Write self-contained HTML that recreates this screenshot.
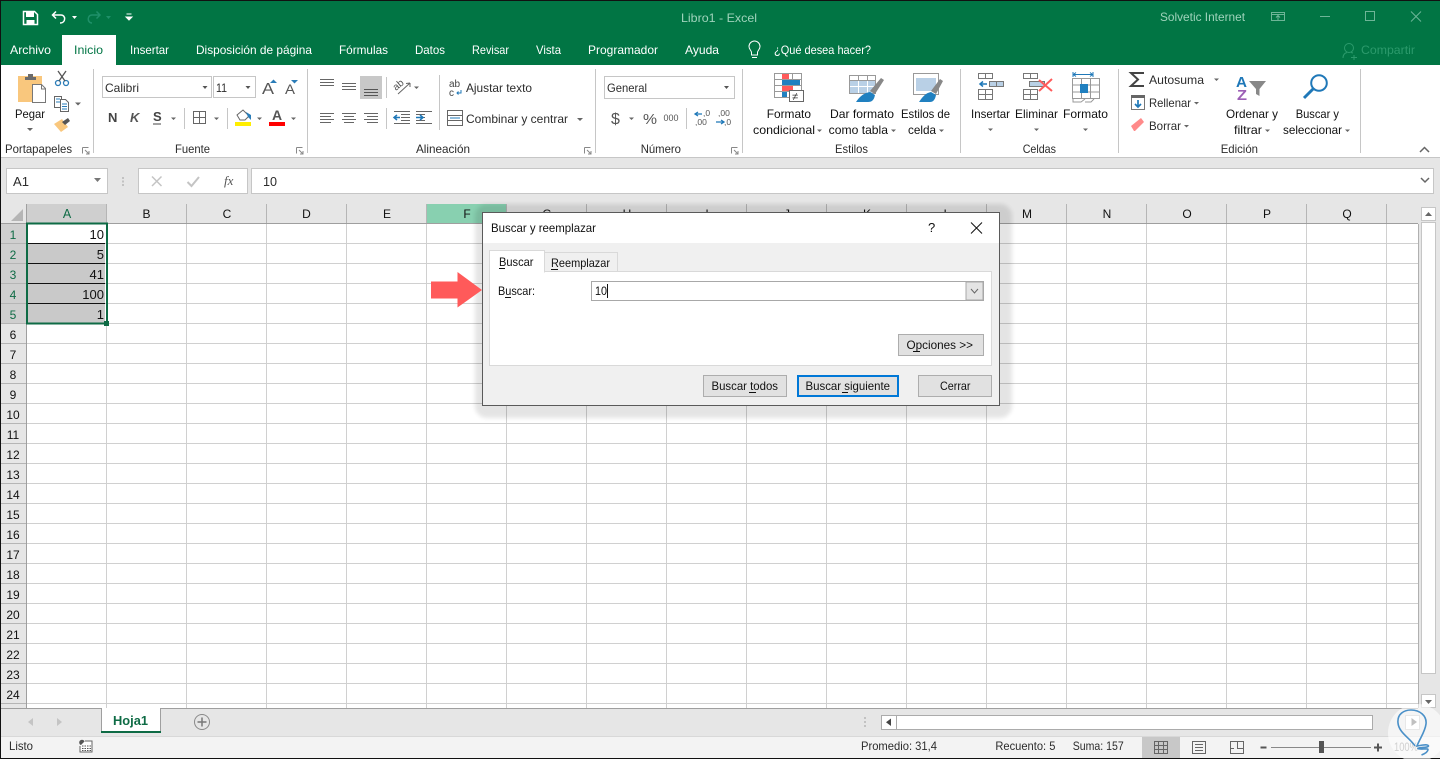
<!DOCTYPE html>
<html lang="es"><head><meta charset="utf-8"><title>Libro1 - Excel</title>
<style>
html,body{margin:0;padding:0;background:#fff;width:1440px;height:759px;overflow:hidden}
svg{display:block}
text{font-family:"Liberation Sans",sans-serif;font-size:12px;fill:#2c2c2c}
.t{fill:#fff}.d{fill:#111}.c{text-anchor:middle;fill:#111}.m{fill:#9fd3bb}
.s{fill:none;stroke:#666;stroke-width:1}.g{fill:#6a6a6a}
</style></head><body>
<svg xmlns="http://www.w3.org/2000/svg" width="1440" height="759" viewBox="0 0 1440 759">
<defs>
<pattern id="grid" x="27" y="224" width="80" height="20" patternUnits="userSpaceOnUse"><path d="M79.500 0V20M0 19.500H80" fill="none" stroke="#d0d0d0"/></pattern>
<filter id="blur" x="-5%" y="-10%" width="110%" height="120%"><feGaussianBlur stdDeviation="2"/></filter>
</defs>
<rect width="1440" height="759" fill="#fff"/>
<!-- title bar -->
<rect x="0" y="0" width="1440" height="65" fill="#017544"/>
<rect x="62" y="35" width="54" height="30" fill="#fff"/>
<!-- QAT -->
<path d="M23.500 11.500H34.500L37.500 14.500V24.500H23.500Z" fill="none" stroke="#fff" stroke-width="1.500"/><rect x="26" y="12" width="8" height="5" fill="#fff"/><rect x="26.500" y="20" width="8" height="4" fill="#fff"/>
<path d="M56 11.500L52.500 15L56 18.500M53 15H61C66 15 66 23 60 23" fill="none" stroke="#fff" stroke-width="1.500"/>
<path d="M72 16H77L74.500 19Z" fill="#fff"/>
<path d="M96.500 11.500L100 15L96.500 18.500M99.500 15H92C87 15 87 23 92 23" fill="none" stroke="#1f9069" stroke-width="1.500"/>
<path d="M106 16H111L108.500 19Z" fill="#1f9069"/>
<path d="M126.500 14H131.500M126 17H132L129 20Z" stroke="#fff" fill="#fff" stroke-width="1"/>
<text x="681" y="22" class="m" textLength="76" lengthAdjust="spacingAndGlyphs">Libro1  -  Excel</text>
<text x="1160" y="21" class="m" textLength="85" lengthAdjust="spacingAndGlyphs">Solvetic Internet</text>
<path d="M1271.500 12.500H1284.500V20.500H1271.500ZM1271.500 14.500H1284.500M1278 20V16M1276 17.500L1278 15.500L1280 17.500" fill="none" stroke="#6db597"/>
<path d="M1320 16.500H1330" stroke="#6db597"/>
<rect x="1365.500" y="11.500" width="9" height="9" fill="none" stroke="#6db597"/>
<path d="M1411 11.500L1421 21.500M1421 11.500L1411 21.500" stroke="#6db597"/>
<!-- tabs -->
<text x="10" y="54" class="t" textLength="41" lengthAdjust="spacingAndGlyphs">Archivo</text>
<text x="74" y="54" style="fill:#017544" textLength="29" lengthAdjust="spacingAndGlyphs">Inicio</text>
<text x="130" y="54" class="t" textLength="39" lengthAdjust="spacingAndGlyphs">Insertar</text>
<text x="196" y="54" class="t" textLength="116" lengthAdjust="spacingAndGlyphs">Disposición de página</text>
<text x="339" y="54" class="t" textLength="49" lengthAdjust="spacingAndGlyphs">Fórmulas</text>
<text x="415" y="54" class="t" textLength="30" lengthAdjust="spacingAndGlyphs">Datos</text>
<text x="472" y="54" class="t" textLength="37" lengthAdjust="spacingAndGlyphs">Revisar</text>
<text x="536" y="54" class="t" textLength="25" lengthAdjust="spacingAndGlyphs">Vista</text>
<text x="588" y="54" class="t" textLength="70" lengthAdjust="spacingAndGlyphs">Programador</text>
<text x="685" y="54" class="t" textLength="34" lengthAdjust="spacingAndGlyphs">Ayuda</text>
<path d="M751.500 55V52.500C751.500 50.500 749 49.500 749 46.500A5.500 5.500 0 0 1 760 46.500C760 49.500 757.500 50.500 757.500 52.500V55ZM752 57.500H757" fill="none" stroke="#fff"/>
<text x="774" y="54" class="t" textLength="97" lengthAdjust="spacingAndGlyphs">¿Qué desea hacer?</text>
<circle cx="1349" cy="48" r="4.500" fill="none" stroke="#2c9a6c"/><path d="M1343 58C1343 54 1345 53 1347 52.500M1351 52.500L1353 53M1354 55V60M1351 57.500H1357" fill="none" stroke="#2c9a6c"/>
<text x="1361" y="54" style="fill:#2c9a6c" textLength="54" lengthAdjust="spacingAndGlyphs">Compartir</text>

<!-- ribbon separators -->
<path d="M93.500 69V153M307.500 69V153M595.500 69V153M742.500 69V153M960.500 69V153M1118.500 69V153M1360.500 69V153" stroke="#c6c6c6"/>
<!-- clipboard -->
<rect x="18" y="76" width="24" height="26" fill="#f9c77d"/><path d="M25 80V77H28V74H33V77H36V80Z" fill="#6b6b6b"/>
<path d="M32.500 84.500H41.500L45.500 88.500V102.500H32.500Z" fill="#fff" stroke="#777"/><path d="M41.500 85V89H45" fill="none" stroke="#777"/>
<text x="15" y="118" class="d" textLength="30" lengthAdjust="spacingAndGlyphs">Pegar</text>
<path d="M27 128H33L30 131Z" fill="#666"/>
<circle cx="58" cy="83" r="2.500" fill="none" stroke="#2a7cb8" stroke-width="1.300"/><circle cx="66" cy="83" r="2.500" fill="none" stroke="#2a7cb8" stroke-width="1.300"/><path d="M59 81L66 71M65 81L58 71" stroke="#555" stroke-width="1.300"/>
<path d="M54.500 96.500H61.500V107.500H54.500Z" fill="#fff" stroke="#666"/><path d="M60.500 99.500H65.500L68.500 102.500V111.500H60.500Z" fill="#fff" stroke="#666"/><path d="M56 99H60M56 102H60M62 104H67M62 106.500H67M62 109H67" stroke="#2a7cb8"/>
<path d="M75 102.500H81L78 105.500Z" fill="#666"/>
<path d="M54 124L62 119L68 127L61 132Z" fill="#f9c77d"/><path d="M62 122L68 118L70 121L65 125Z" fill="#555"/>
<text x="5" y="153" textLength="67" lengthAdjust="spacingAndGlyphs">Portapapeles</text>
<path d="M82.500 147.500H88.500M82.500 147.500V153.500M85 150L89 154M89 151V154H86" fill="none" stroke="#888"/>
<!-- font -->
<rect x="102.500" y="76.500" width="109" height="21" fill="#fff" stroke="#c6c6c6"/><rect x="213.500" y="76.500" width="42" height="21" fill="#fff" stroke="#c6c6c6"/>
<text x="105" y="92" textLength="34" lengthAdjust="spacingAndGlyphs">Calibri</text><text x="216" y="92" textLength="11" lengthAdjust="spacingAndGlyphs">11</text>
<path d="M202.500 86H207.500L205 89ZM245.500 86H250.500L248 89Z" fill="#555"/>
<text x="262" y="94" style="font-size:16px;fill:#555" textLength="12" lengthAdjust="spacingAndGlyphs">A</text><path d="M270 83H277L273.500 79.500Z" fill="#2a7cb8"/>
<text x="285" y="94" style="font-size:14px;fill:#555" textLength="10" lengthAdjust="spacingAndGlyphs">A</text><path d="M291 80H298L294.500 83.500Z" fill="#2a7cb8"/>
<text x="108" y="122" style="font-weight:bold;font-size:13px;fill:#444">N</text>
<text x="130" y="122" style="font-weight:bold;font-style:italic;font-size:13px;fill:#555">K</text>
<text x="153" y="121" style="font-weight:bold;font-size:13px;fill:#444">S</text><path d="M153 124H161" stroke="#444"/>
<path d="M171 117.500H176L173.500 120ZM214 117.500H219L216.500 120ZM257 117.500H262L259.500 120ZM291 117.500H296L293.500 120Z" fill="#666"/>
<path d="M184.500 108V129M227.500 108V129M386.500 108V129M386.500 77V98M439.500 75V130M686.500 108V129" stroke="#c6c6c6"/>
<path d="M193.500 111.500H205.500V123.500H193.500ZM199.500 111.500V123.500M193.500 117.500H205.500" fill="none" stroke="#666"/>
<path d="M237 115L243 110L249 116L245 120H240Z" fill="#fff" stroke="#666"/><path d="M246 112L251 115V120L248 117Z" fill="#2a7cb8"/><rect x="235" y="122" width="16" height="4" fill="#ffee00"/>
<text x="272" y="120" style="font-weight:bold;font-size:14px;fill:#555">A</text><rect x="269" y="122" width="16" height="4" fill="#f00"/>
<!-- alignment -->
<path d="M320 79.500H334M320 82.500H334M320 85.500H334M342 83.500H356M342 86.500H356M342 89.500H356" stroke="#666"/>
<rect x="360" y="76" width="22" height="23" fill="#c8c8c8"/><path d="M364 89.500H378M364 92.500H378M364 95.500H378" stroke="#555"/>
<text x="0" y="0" transform="translate(396 91) rotate(-40)" style="font-size:10px;fill:#555">ab</text><path d="M398 94L410 83M410 83L406 83.500M410 83V87" fill="none" stroke="#666"/>
<path d="M414 86.500H419L416.500 89Z" fill="#666"/>
<path d="M320 113.500H334M320 116.500H331M320 119.500H334M320 122.500H331M342 113.500H356M344 116.500H354M342 119.500H356M344 122.500H354M364 113.500H378M367 116.500H378M364 119.500H378M367 122.500H378" stroke="#666"/>
<path d="M394 111.500H410M401 114.500H410M401 117.500H410M401 120.500H410M394 123.500H410M416 111.500H432M416 114.500H425M416 117.500H425M416 120.500H425M416 123.500H432" stroke="#666"/>
<path d="M400 117.500H394M397 115L394 117.500L397 120M416 117.500H423M420 115L423 117.500L420 120" fill="none" stroke="#1f78b8" stroke-width="1.500"/>
<text x="449" y="87" style="font-size:10px;fill:#444">ab</text><text x="449" y="96" style="font-size:10px;fill:#444">c</text><path d="M461 90V93H457M458.500 91.500L457 93L458.500 94.500" fill="none" stroke="#1f78b8"/>
<text x="466" y="92" textLength="66" lengthAdjust="spacingAndGlyphs">Ajustar texto</text>
<path d="M447.500 110.500H462.500V125.500H447.500ZM447.500 115.500H462.500M447.500 120.500H462.500" fill="none" stroke="#666"/><rect x="449" y="116" width="12" height="4" fill="#fff"/><path d="M450 118H460" stroke="#1f78b8"/>
<text x="466" y="123" textLength="102" lengthAdjust="spacingAndGlyphs">Combinar y centrar</text>
<path d="M577 118H583L580 121Z" fill="#666"/>
<text x="416" y="153" textLength="54" lengthAdjust="spacingAndGlyphs">Alineación</text>
<path d="M584.500 147.500H590.500M584.500 147.500V153.500M587 150L591 154M591 151V154H588" fill="none" stroke="#888"/>
<path d="M296.500 147.500H302.500M296.500 147.500V153.500M299 150L303 154M303 151V154H300" fill="none" stroke="#888"/>
<text x="175" y="153" textLength="35" lengthAdjust="spacingAndGlyphs">Fuente</text>
<!-- number -->
<rect x="604.500" y="76.500" width="130" height="22" fill="#fff" stroke="#c6c6c6"/>
<text x="607" y="92" textLength="40" lengthAdjust="spacingAndGlyphs">General</text><path d="M724 86H729L726.500 89Z" fill="#555"/>
<text x="611" y="124" style="font-size:16px;fill:#555">$</text><path d="M629 117.500H634L631.500 120Z" fill="#666"/>
<text x="643" y="124" style="font-size:15px;fill:#555" textLength="14" lengthAdjust="spacingAndGlyphs">%</text>
<text x="663.500" y="121" style="font-size:9.500px;fill:#555" textLength="15" lengthAdjust="spacingAndGlyphs">000</text>
<path d="M702 114H695M698 112L695 114L698 116" fill="none" stroke="#1f78b8" stroke-width="1.300"/><text x="703" y="116" style="font-size:8.500px;fill:#555">,0</text><text x="695" y="125" style="font-size:8.500px;fill:#555">,00</text>
<text x="718" y="116" style="font-size:8.500px;fill:#555">,00</text><path d="M716 122H724M721 120L724 122L721 124" fill="none" stroke="#1f78b8" stroke-width="1.300"/><text x="724" y="125" style="font-size:8.500px;fill:#555">,0</text>
<text x="640.700" y="153" textLength="40.300" lengthAdjust="spacingAndGlyphs">Número</text>
<path d="M731.500 147.500H737.500M731.500 147.500V153.500M734 150L738 154M738 151V154H735" fill="none" stroke="#888"/>
<!-- styles -->
<path d="M774.500 73.500H801.500V97.500H774.500ZM774.500 79.500H801.500M774.500 85.500H801.500M774.500 91.500H801.500M783.500 73.500V97.500M792.500 73.500V97.500" fill="#fff" stroke="#999"/>
<rect x="782" y="74" width="7" height="5" fill="#ff5a5a"/><rect x="782" y="80" width="18" height="5" fill="#2080c0"/><rect x="782" y="86" width="11" height="5" fill="#ff5a5a"/><rect x="782" y="92" width="5" height="5" fill="#2080c0"/>
<rect x="789.500" y="90.500" width="14" height="11" fill="#fff" stroke="#666"/><text x="792" y="100" style="font-size:11px;fill:#333">≠</text>
<path d="M849.500 75.500H875.500V93.500H849.500ZM849.500 80.500H875.500M849.500 86.500H875.500M858.500 75.500V93.500M867.500 75.500V93.500" fill="#fff" stroke="#999"/><rect x="850" y="81" width="25" height="12" fill="#b9d0e6"/><path d="M858.500 81V93M867.500 81V93M850 86.500H875" stroke="#fff"/>
<path d="M870 91L881 78L884 80L875 94Z" fill="#888"/><path d="M856 102C860 96 864 93 870 92L875 95C874 100 872 102 868 102Z" fill="#2080c0"/>
<path d="M913.500 73.500H938.500V94.500H913.500Z" fill="#fff" stroke="#999"/><rect x="916" y="78" width="20" height="13" fill="#b9d0e6"/>
<path d="M931 91L940 79L943 81L936 94Z" fill="#888"/><path d="M919 102C923 96 926 93 931 92L936 95C935 100 933 102 930 102Z" fill="#2080c0"/>
<text x="766.700" y="118" class="d" textLength="44.300" lengthAdjust="spacingAndGlyphs">Formato</text>
<text x="753" y="134" class="d" textLength="62" lengthAdjust="spacingAndGlyphs">condicional</text><path d="M817 129.500H822L819.500 132Z" fill="#666"/>
<text x="830" y="118" class="d" textLength="64" lengthAdjust="spacingAndGlyphs">Dar formato</text>
<text x="828.700" y="134" class="d" textLength="59.300" lengthAdjust="spacingAndGlyphs">como tabla</text><path d="M891 129.500H896L893.500 132Z" fill="#666"/>
<text x="901" y="118" class="d" textLength="49" lengthAdjust="spacingAndGlyphs">Estilos de</text>
<text x="908" y="134" class="d" textLength="28" lengthAdjust="spacingAndGlyphs">celda</text><path d="M939 129.500H944L941.500 132Z" fill="#666"/>
<text x="835" y="153" textLength="33" lengthAdjust="spacingAndGlyphs">Estilos</text>
<!-- cells -->
<path d="M978.500 73.500H992.500V78.500H978.500ZM985.500 73.500V78.500M978.500 89.500H992.500V99.500H978.500ZM978.500 94.500H992.500M985.500 89.500V99.500" fill="#fff" stroke="#777"/>
<path d="M989.500 81.500H1003.500V86.500H989.500ZM996.500 81.500V86.500" fill="#b9d0e6" stroke="#777"/><path d="M987 84H980M983 81.500L980 84L983 86.500" fill="none" stroke="#1f78b8" stroke-width="1.500"/>
<path d="M1023.500 73.500H1037.500V78.500H1023.500ZM1030.500 73.500V78.500M1023.500 89.500H1037.500V99.500H1023.500ZM1023.500 94.500H1037.500M1030.500 89.500V99.500" fill="#fff" stroke="#777"/>
<rect x="1029.500" y="81.500" width="15" height="5" fill="#b9d0e6" stroke="#777"/><path d="M1039 80L1052 91M1052 79L1039 91" stroke="#ff5a5a" stroke-width="2"/>
<path d="M1073 74.500H1093M1073 72V77M1093 72V77M1076 72.500L1073.500 74.500L1076 76.500M1090 72.500L1092.500 74.500L1090 76.500" fill="none" stroke="#1f78b8"/>
<path d="M1072.500 78.500H1099.500V98.500H1072.500ZM1072.500 85H1099.500M1072.500 92H1099.500M1081.500 78.500V98.500M1090.500 78.500V98.500M1073 98.500V102H1081L1085 99M1085 102H1091L1094 99" fill="#fff" stroke="#999"/>
<rect x="1080" y="84" width="8" height="9" fill="#2080c0"/>
<text x="971" y="118" class="d" textLength="39" lengthAdjust="spacingAndGlyphs">Insertar</text><path d="M988 128.500H993L990.500 131Z" fill="#666"/>
<text x="1015" y="118" class="d" textLength="43" lengthAdjust="spacingAndGlyphs">Eliminar</text><path d="M1034 128.500H1039L1036.500 131Z" fill="#666"/>
<text x="1063" y="118" class="d" textLength="45" lengthAdjust="spacingAndGlyphs">Formato</text><path d="M1083 128.500H1088L1085.500 131Z" fill="#666"/>
<text x="1022.700" y="153" textLength="33.300" lengthAdjust="spacingAndGlyphs">Celdas</text>
<!-- editing -->
<path d="M1144 73H1131L1138 79.500L1131 86H1144" fill="none" stroke="#444" stroke-width="2"/>
<text x="1149" y="84" textLength="55" lengthAdjust="spacingAndGlyphs">Autosuma</text><path d="M1214 78.500H1219L1216.500 81Z" fill="#666"/>
<rect x="1131.500" y="95.500" width="13" height="14" fill="#fff" stroke="#777"/><rect x="1131" y="95" width="14" height="3" fill="#666"/><path d="M1138 100V107M1135 104L1138 107L1141 104" fill="none" stroke="#1f78b8" stroke-width="1.700"/>
<text x="1149" y="107" textLength="42" lengthAdjust="spacingAndGlyphs">Rellenar</text><path d="M1194 102H1199L1196.500 104.500Z" fill="#666"/>
<path d="M1131 126L1141 118L1144 122L1135 131H1134Z" fill="#ff8a8a"/>
<text x="1149" y="130" textLength="32" lengthAdjust="spacingAndGlyphs">Borrar</text><path d="M1184 125H1189L1186.500 127.500Z" fill="#666"/>
<text x="1236" y="87" style="font-weight:bold;font-size:15px;fill:#1f78b8" textLength="11" lengthAdjust="spacingAndGlyphs">A</text>
<text x="1237" y="100" style="font-weight:bold;font-size:15px;fill:#9c5fb5" textLength="10" lengthAdjust="spacingAndGlyphs">Z</text>
<path d="M1249 81H1266L1259.500 89V96L1256 94V89Z" fill="#888"/>
<circle cx="1319" cy="83" r="7.800" fill="none" stroke="#1f78b8" stroke-width="2"/><path d="M1313 89L1304 98" stroke="#1f78b8" stroke-width="3"/>
<text x="1226" y="118" class="d" textLength="52" lengthAdjust="spacingAndGlyphs">Ordenar y</text>
<text x="1234" y="134" class="d" textLength="28" lengthAdjust="spacingAndGlyphs">filtrar</text><path d="M1265 129.500H1270L1267.500 132Z" fill="#666"/>
<text x="1295.700" y="118" class="d" textLength="43.300" lengthAdjust="spacingAndGlyphs">Buscar y</text>
<text x="1283" y="134" class="d" textLength="59" lengthAdjust="spacingAndGlyphs">seleccionar</text><path d="M1345 129.500H1350L1347.500 132Z" fill="#666"/>
<text x="1220.700" y="153" textLength="37.300" lengthAdjust="spacingAndGlyphs">Edición</text>
<path d="M1420 152L1424.500 147.500L1429 152" fill="none" stroke="#666" stroke-width="1.500"/>

<!-- formula area -->
<rect x="0" y="157" width="1440" height="67" fill="#e6e6e6"/><path d="M0 157.500H1440" stroke="#c6c6c6"/>
<rect x="6.500" y="168.500" width="101" height="25" fill="#fff" stroke="#c6c6c6"/>
<text x="13" y="186" style="font-size:12.500px" textLength="16" lengthAdjust="spacingAndGlyphs">A1</text><path d="M94 178H101L97.500 182Z" fill="#777"/>
<path d="M123 177V179M123 180.500V182.500M123 184V186" stroke="#b5b5b5" stroke-width="1.500"/>
<rect x="138.500" y="168.500" width="109" height="25" fill="#fff" stroke="#c6c6c6"/><rect x="251.500" y="168.500" width="1182" height="25" fill="#fff" stroke="#c6c6c6"/>
<path d="M152 176.500L161.500 186M161.500 176.500L152 186" stroke="#c4c4c4" stroke-width="1.500"/>
<path d="M187.500 182L191.500 186L199 177" fill="none" stroke="#c4c4c4" stroke-width="2"/>
<text x="224" y="185" style="font-family:'Liberation Serif',serif;font-style:italic;font-size:13px;fill:#555">fx</text>
<text x="263" y="186" style="font-size:12.500px" textLength="14" lengthAdjust="spacingAndGlyphs">10</text>
<path d="M1421 178L1425 182L1429 178" fill="none" stroke="#666" stroke-width="1.500"/>
<!-- sheet -->
<rect x="27" y="224" width="1391" height="484" fill="#fff"/>
<rect x="27" y="224" width="1391" height="484" fill="url(#grid)"/>
<rect x="0" y="204" width="27" height="504" fill="#e6e6e6"/>
<rect x="27" y="204" width="1391" height="19" fill="#e6e6e6"/>
<path d="M23 209V221H11Z" fill="#b5b5b5"/>
<rect x="27" y="204" width="80" height="19" fill="#cfcfcf"/>
<rect x="427" y="204" width="80" height="19" fill="#88d0b0"/>
<rect x="1" y="224" width="25" height="100" fill="#cfcfcf"/>
<path d="M106.500 204V223M186.500 204V223M266.500 204V223M346.500 204V223M426.500 204V223M506.500 204V223M586.500 204V223M666.500 204V223M746.500 204V223M826.500 204V223M906.500 204V223M986.500 204V223M1066.500 204V223M1146.500 204V223M1226.500 204V223M1306.500 204V223M1386.500 204V223" stroke="#b5b5b5"/>
<path d="M0 223.500H1418M26.500 204V708" stroke="#9f9f9f"/>
<path d="M1 243.500H26M1 263.500H26M1 283.500H26M1 303.500H26M1 323.500H26M1 343.500H26M1 363.500H26M1 383.500H26M1 403.500H26M1 423.500H26M1 443.500H26M1 463.500H26M1 483.500H26M1 503.500H26M1 523.500H26M1 543.500H26M1 563.500H26M1 583.500H26M1 603.500H26M1 623.500H26M1 643.500H26M1 663.500H26M1 683.500H26M1 703.500H26" stroke="#b5b5b5"/>
<g style="font-size:12.500px">
<text x="67" y="218" class="c" style="fill:#0e6b45;font-size:12.500px">A</text><text x="146.500" y="218" class="c">B</text><text x="227" y="218" class="c">C</text><text x="306.500" y="218" class="c">D</text><text x="387" y="218" class="c">E</text><text x="467" y="218" class="c">F</text><text x="547" y="218" class="c">G</text><text x="627" y="218" class="c">H</text><text x="707" y="218" class="c">I</text><text x="787" y="218" class="c">J</text><text x="867" y="218" class="c">K</text><text x="947" y="218" class="c">L</text><text x="1027" y="218" class="c">M</text><text x="1107" y="218" class="c">N</text><text x="1187" y="218" class="c">O</text><text x="1267" y="218" class="c">P</text><text x="1347" y="218" class="c">Q</text>
<text x="13" y="239" class="c" style="fill:#0e6b45">1</text><text x="13" y="259" class="c" style="fill:#0e6b45">2</text><text x="13" y="279" class="c" style="fill:#0e6b45">3</text><text x="13" y="299" class="c" style="fill:#0e6b45">4</text><text x="13" y="319" class="c" style="fill:#0e6b45">5</text><text x="13" y="339" class="c">6</text><text x="13" y="359" class="c">7</text><text x="13" y="379" class="c">8</text><text x="13" y="399" class="c">9</text><text x="13" y="419" class="c">10</text><text x="13" y="439" class="c">11</text><text x="13" y="459" class="c">12</text><text x="13" y="479" class="c">13</text><text x="13" y="499" class="c">14</text><text x="13" y="519" class="c">15</text><text x="13" y="539" class="c">16</text><text x="13" y="559" class="c">17</text><text x="13" y="579" class="c">18</text><text x="13" y="599" class="c">19</text><text x="13" y="619" class="c">20</text><text x="13" y="639" class="c">21</text><text x="13" y="659" class="c">22</text><text x="13" y="679" class="c">23</text><text x="13" y="699" class="c">24</text>
</g>
<!-- selection -->
<rect x="28" y="244" width="77" height="79" fill="#c9c9c9"/>
<path d="M28 243.500H105M28 263.500H105M28 283.500H105M28 303.500H105" stroke="#111"/>
<text x="104" y="239" class="d" style="text-anchor:end;font-size:13px">10</text><text x="104" y="259" class="d" style="text-anchor:end;font-size:13px">5</text><text x="104" y="279" class="d" style="text-anchor:end;font-size:13px">41</text><text x="104" y="299" class="d" style="text-anchor:end;font-size:13px">100</text><text x="104" y="319" class="d" style="text-anchor:end;font-size:13px">1</text>
<rect x="27" y="223.500" width="80" height="100" fill="none" stroke="#0e6b45" stroke-width="2"/>
<rect x="104" y="321" width="5" height="5" fill="#0e6b45"/>
<!-- v scroll -->
<rect x="1418" y="204" width="22" height="504" fill="#e6e6e6"/><path d="M1418.500 224V708" stroke="#b0b0b0"/>
<rect x="1421.500" y="207.500" width="14" height="13" fill="#fff" stroke="#c6c6c6"/><path d="M1425 216L1428.500 212L1432 216Z" fill="#666"/>
<rect x="1421.500" y="222.500" width="14" height="451" fill="#fff" stroke="#c6c6c6"/>
<rect x="1421.500" y="694.500" width="14" height="13" fill="#fff" stroke="#c6c6c6"/><path d="M1425 700H1432L1428.500 704Z" fill="#666"/>
<!-- sheet tabs -->
<rect x="0" y="708" width="1440" height="29" fill="#e6e6e6"/><path d="M0 708.500H1418" stroke="#9f9f9f"/>
<path d="M101.500 708V732M160.500 708V732" stroke="#9f9f9f"/><rect x="102" y="708" width="58" height="24" fill="#fff"/><rect x="101" y="731" width="60" height="2" fill="#0e6b45"/>
<text x="113" y="725" style="font-weight:bold;font-size:13px;fill:#0e6b45" textLength="35" lengthAdjust="spacingAndGlyphs">Hoja1</text>
<path d="M33 718V726L28 722ZM57 718V726L62 722Z" fill="#c4c4c4"/>
<circle cx="202" cy="722" r="7.500" fill="none" stroke="#8a8a8a"/><path d="M197.500 722H206.500M202 717.500V726.500" stroke="#777" stroke-width="1.500"/>
<path d="M865 717V719M865 721V723M865 725V727" stroke="#b5b5b5" stroke-width="1.500"/>
<rect x="881.500" y="715.500" width="491" height="14" fill="#fff" stroke="#ababab"/><path d="M896.500 715V729" stroke="#ababab"/>
<path d="M891 718.500V726L886 722.200Z" fill="#444"/>
<rect x="1405.500" y="715.500" width="14" height="14" fill="#fff" stroke="#c6c6c6"/>
<!-- status -->
<rect x="0" y="737" width="1440" height="21" fill="#f3f3f3"/>
<path d="M0 736.500H1440" stroke="#d8d8d8"/>
<text x="9" y="750" textLength="24" lengthAdjust="spacingAndGlyphs">Listo</text>
<circle cx="82" cy="742.500" r="2.800" fill="#555"/><path d="M85 741H92V752H80V746" fill="#fff" stroke="#666"/><path d="M82 746H91M82 748.500H91M82 750.500H91" stroke="#555" stroke-dasharray="1.500 1"/>
<text x="861" y="750" textLength="76" lengthAdjust="spacingAndGlyphs">Promedio: 31,4</text>
<text x="995.400" y="750" textLength="60" lengthAdjust="spacingAndGlyphs">Recuento: 5</text>
<text x="1072.700" y="750" textLength="51" lengthAdjust="spacingAndGlyphs">Suma: 157</text>
<rect x="1142" y="737" width="38" height="21" fill="#c8c8c8"/>
<path d="M1154.500 741.500H1167.500V753.500H1154.500ZM1154.500 745.500H1167.500M1154.500 749.500H1167.500M1158.500 741.500V753.500M1163.500 741.500V753.500" fill="none" stroke="#666"/>
<path d="M1192.500 741.500H1205.500V753.500H1192.500Z" fill="none" stroke="#666"/><path d="M1195 744.500H1203M1195 747.500H1203M1195 750.500H1203" stroke="#666"/>
<path d="M1230.500 741.500H1243.500V753.500H1230.500ZM1237.500 741.500V748.500H1243.500M1230.500 748.500H1234" fill="none" stroke="#666"/>
<path d="M1260.500 747.500H1266.500" stroke="#555" stroke-width="2"/>
<path d="M1271 747.500H1371" stroke="#888"/><rect x="1319" y="741" width="5" height="12" fill="#555"/>
<path d="M1374 747.500H1382M1378 743.500V751.500" stroke="#555" stroke-width="2"/>
<text x="1394" y="751" style="fill:#888" textLength="24" lengthAdjust="spacingAndGlyphs">100%</text>
<rect x="0" y="758" width="1440" height="1" fill="#111"/>
<rect x="0" y="0" width="1440" height="1" fill="#111"/><rect x="0" y="0" width="1" height="759" fill="#111"/>
<!-- watermark -->
<circle cx="1417" cy="733" r="29" fill="#fff" fill-opacity=".6"/>
<path d="M1415 746C1410 738 1399 733 1398 723C1397 714 1404 710 1411 710C1420 710 1427 716 1426 724C1425 732 1420 738 1417 746C1422 745 1428 744 1428.500 746C1428 748 1419 747 1418 748.500C1420 750 1428 748 1428 749.500C1428 752 1424 754 1421.500 755" fill="none" stroke="#4a90c8" stroke-width="1.600"/>
<path d="M1411.500 718V726L1417 722Z" fill="#c0c0c0"/>
<!-- dialog -->
<rect x="475" y="204" width="537" height="214" rx="12" fill="#000" opacity=".1" filter="url(#blur)"/>
<rect x="482.500" y="212.500" width="517" height="193" fill="#f0f0f0" stroke="#5a5a5a"/>
<rect x="483" y="213" width="516" height="30" fill="#fff"/>
<text x="491" y="232" class="d" textLength="105" lengthAdjust="spacingAndGlyphs">Buscar y reemplazar</text>
<text x="928" y="232" class="d" style="font-size:13px">?</text>
<path d="M971 222.500L982 233.500M982 222.500L971 233.500" stroke="#111"/>
<rect x="489.500" y="271.500" width="502" height="94" fill="#fff" stroke="#d9d9d9"/>
<path d="M544.500 271.500V252.500H617.500V271.500Z" fill="#f0f0f0" stroke="#d9d9d9"/>
<path d="M489.500 272V250.500H544.500V272Z" fill="#fff" stroke="#d9d9d9"/><rect x="490" y="270" width="54" height="3" fill="#fff"/>
<text x="499" y="266" class="d" textLength="34.500" lengthAdjust="spacingAndGlyphs">Buscar</text><path d="M499 268.500H505" stroke="#111"/>
<text x="551" y="267" class="d" textLength="59" lengthAdjust="spacingAndGlyphs">Reemplazar</text><path d="M551 269.500H558" stroke="#111"/>
<text x="498" y="295" class="d" textLength="37" lengthAdjust="spacingAndGlyphs">Buscar:</text><path d="M505 297.500H511" stroke="#111"/>
<rect x="591.500" y="281.500" width="392" height="19" fill="#fff" stroke="#a8a8a8"/>
<rect x="966" y="282" width="17" height="18" fill="#e4e4e4" stroke="#a8a8a8"/><path d="M971 289L974.500 293L978 289" fill="none" stroke="#666"/>
<text x="595" y="295" class="d" textLength="12" lengthAdjust="spacingAndGlyphs">10</text><path d="M607.500 284V298" stroke="#111"/>
<path d="M431 281.500H457.500V272L482 290L457.500 307.500V298.500H431Z" fill="#ff5a5a"/>
<rect x="898.500" y="334.500" width="85" height="21" fill="#e1e1e1" stroke="#adadad"/>
<text x="906.500" y="349" class="d" textLength="66.500" lengthAdjust="spacingAndGlyphs">Opciones &gt;&gt;</text><path d="M913 351.500H920" stroke="#111"/>
<rect x="703.500" y="375.500" width="83" height="21" fill="#e1e1e1" stroke="#adadad"/>
<text x="711.500" y="390" class="d" textLength="66.500" lengthAdjust="spacingAndGlyphs">Buscar todos</text><path d="M749 392.500H756" stroke="#111"/>
<rect x="798" y="376" width="100" height="20" fill="#e1e1e1" stroke="#0078d7" stroke-width="2"/>
<text x="805.500" y="390" class="d" textLength="84.500" lengthAdjust="spacingAndGlyphs">Buscar siguiente</text><path d="M842 392.500H848" stroke="#111"/>
<rect x="918.500" y="375.500" width="73" height="21" fill="#e1e1e1" stroke="#adadad"/>
<text x="940" y="390" class="d" textLength="30.500" lengthAdjust="spacingAndGlyphs">Cerrar</text>
</svg>
</body></html>
